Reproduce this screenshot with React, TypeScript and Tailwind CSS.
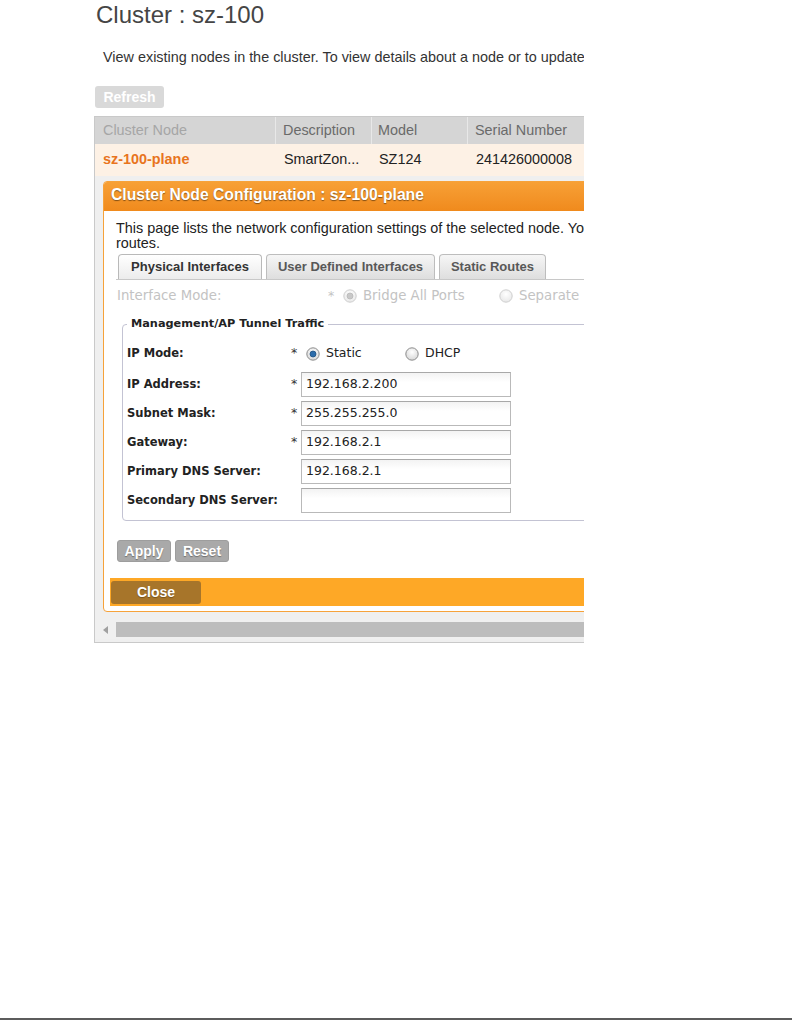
import React from "react";

function Radio({ checked, disabled }: { checked?: boolean; disabled?: boolean }) {
  const ring = disabled ? "#cfcfcf" : "#8c8c8c";
  const dot = disabled ? "#c8c8c8" : "#2b6cab";
  const gid = disabled ? "rgd" : "rg";
  return (
    <svg width="14" height="14" viewBox="0 0 14 14" className="shrink-0">
      <defs>
        <radialGradient id={gid} cx="50%" cy="35%" r="70%">
          <stop offset="0%" stopColor="#ffffff" />
          <stop offset="100%" stopColor={disabled ? "#e6e6e6" : "#d4d4d4"} />
        </radialGradient>
      </defs>
      <circle cx="7" cy="7" r="6.2" fill={`url(#${gid})`} stroke={ring} strokeWidth="1" />
      {checked && <circle cx="7" cy="7" r="3" fill={dot} stroke={disabled ? "#b8b8b8" : "#1d4f80"} strokeWidth="0.8" />}
    </svg>
  );
}

const rows = [
  { label: "IP Address:", star: true, value: "192.168.2.200" },
  { label: "Subnet Mask:", star: true, value: "255.255.255.0" },
  { label: "Gateway:", star: true, value: "192.168.2.1" },
  { label: "Primary DNS Server:", star: false, value: "192.168.2.1" },
  { label: "Secondary DNS Server:", star: false, value: "" },
];

export default function App() {
  return (
    <div className="flex h-[1020px] w-[792px] flex-col bg-white font-['Liberation_Sans',Arial,sans-serif]">
      <div className="ml-[94px] w-[490px] overflow-hidden">
        <h1 className="ml-[2px] mt-[1px] whitespace-nowrap text-[24px] leading-[28px] text-[#454545]">Cluster : sz-100</h1>
        <p className="ml-[9px] mt-[20px] whitespace-nowrap text-[14.4px] leading-[16px] text-[#333]">
          View existing nodes in the cluster. To view details about a node or to update its settings, click the node name.
        </p>
        <button className="ml-[1px] mt-[21px] h-[22px] w-[69px] rounded-[3px] bg-[#d9d9d9] text-[14px] font-bold leading-[22px] text-white">
          Refresh
        </button>

        <div className="mt-[7px] w-[720px] border border-[#c9c9c9] bg-[#efefef] pb-[3px]">
          {/* header */}
          <div className="flex h-[27px] bg-[#d5d5d5] text-[14.4px] leading-[16px] text-[#6a6a6a]">
            <div className="h-full w-[181px] border-r border-[#e8e8e8] pl-[8px] pt-[5px] text-[#a6a6a6]">Cluster Node</div>
            <div className="h-full w-[96px] border-r border-[#e8e8e8] pl-[7px] pt-[5px]">Description</div>
            <div className="h-full w-[96px] border-r border-[#e8e8e8] pl-[6px] pt-[5px]">Model</div>
            <div className="h-full flex-1 pl-[7px] pt-[5px]">Serial Number</div>
          </div>
          {/* row */}
          <div className="flex h-[32px] items-center bg-[#fdf1e5] text-[14.4px] text-[#222]">
            <div className="w-[181px] pl-[8px] font-bold text-[#e8741d]">sz-100-plane</div>
            <div className="w-[96px] pl-[8px]">SmartZon...</div>
            <div className="w-[96px] pl-[7px]">SZ124</div>
            <div className="flex-1 pl-[8px]">241426000008</div>
          </div>

          {/* dialog */}
          <div className="ml-[8px] mt-[5px] w-[640px] rounded-[4px] border border-[#f6a23a] bg-white">
            <div className="h-[29px] rounded-t-[3px] bg-gradient-to-b from-[#f7a035] to-[#f08a1c] pl-[7px] pt-[4px] text-[15.7px] font-bold leading-[18px] text-white [text-shadow:0_1px_1px_rgba(0,0,0,0.45)]">
              Cluster Node Configuration : sz-100-plane
            </div>
            <div className="pl-[12px]">
              <p className="mt-[10px] whitespace-nowrap text-[14.4px] leading-[15px] text-[#222]">
                This page lists the network configuration settings of the selected node. You can update the interface settings and static
                <br />
                routes.
              </p>
              {/* tabs */}
              <div className="mt-[3px] flex gap-[4px] border-b border-[#c8c8c8] pl-[2px] text-[13px] font-bold">
                <div className="flex h-[25px] w-[144px] items-center justify-center rounded-t-[4px] border border-b-0 border-[#b9b9b9] bg-gradient-to-b from-white to-[#ececec] text-[#333]">
                  Physical Interfaces
                </div>
                <div className="flex h-[25px] w-[169px] items-center justify-center rounded-t-[4px] border border-b-0 border-[#bdbdbd] bg-gradient-to-b from-[#f6f6f6] to-[#dedede] text-[#585858]">
                  User Defined Interfaces
                </div>
                <div className="flex h-[25px] w-[107px] items-center justify-center rounded-t-[4px] border border-b-0 border-[#bdbdbd] bg-gradient-to-b from-[#f6f6f6] to-[#dedede] text-[#585858]">
                  Static Routes
                </div>
              </div>

              <div className="font-['DejaVu_Sans',Tahoma,sans-serif]">
                {/* interface mode */}
                <div className="mt-[7px] flex h-[18px] items-center whitespace-nowrap pl-[1px] text-[13.3px] text-[#c3c3c3]">
                  <div className="w-[211px]">Interface Mode:</div>
                  <div className="w-[15px] text-[12.5px]">*</div>
                  <Radio checked disabled />
                  <div className="ml-[6px] w-[136px]">Bridge All Ports</div>
                  <Radio disabled />
                  <div className="ml-[6px]">Separate Ports</div>
                </div>

                {/* fieldset */}
                <fieldset className="ml-[6px] mt-[12px] w-[600px] rounded-[4px] border border-[#c3c3d3] px-[4px] pb-[7px]">
                  <legend className="px-[4px] text-[11.3px] font-bold leading-[14px] text-[#222]">Management/AP Tunnel Traffic</legend>
                  <div className="mt-[10px] flex h-[25px] items-center text-[12.5px] text-[#222]">
                    <div className="w-[164px] text-[11.5px] font-bold">IP Mode:</div>
                    <div className="w-[10px] text-[#333]">*</div>
                    <div className="ml-[5px] flex items-center">
                      <Radio checked />
                      <span className="ml-[6px] w-[79px]">Static</span>
                      <Radio />
                      <span className="ml-[6px]">DHCP</span>
                    </div>
                  </div>
                  <div className="mt-[6px] flex flex-col gap-[4px]">
                    {rows.map((r) => (
                      <div key={r.label} className="flex h-[25px] items-center text-[#222]">
                        <div className="w-[164px] whitespace-nowrap text-[11.5px] font-bold">{r.label}</div>
                        <div className="w-[10px] text-[12.5px] text-[#333]">{r.star ? "*" : ""}</div>
                        <div className="flex h-[25px] w-[210px] items-center border border-[#b9b9b9] border-t-[#a8a8a8] bg-gradient-to-b from-[#f3f3f3] to-white to-40% pl-[4px] text-[12.5px]">
                          {r.value}
                        </div>
                      </div>
                    ))}
                  </div>
                </fieldset>
              </div>

              {/* buttons */}
              <div className="mt-[19px] flex gap-[4px] pl-[1px]">
                <button className="h-[22px] w-[54px] rounded-[3px] border border-[#9d9d9d] bg-[#a9a9a9] text-[14px] font-bold leading-[20px] text-white [text-shadow:0_1px_1px_rgba(0,0,0,0.35)]">
                  Apply
                </button>
                <button className="h-[22px] w-[54px] rounded-[3px] border border-[#9d9d9d] bg-[#a9a9a9] text-[14px] font-bold leading-[20px] text-white [text-shadow:0_1px_1px_rgba(0,0,0,0.35)]">
                  Reset
                </button>
              </div>
            </div>

            {/* footer */}
            <div className="mb-[5px] ml-[6px] mt-[16px] flex h-[28px] items-center bg-[#fea826] pl-[1px]">
              <button className="h-[23px] w-[90px] rounded-[3px] bg-[#a7752a] text-[14px] font-bold leading-[23px] text-white [text-shadow:0_1px_1px_rgba(0,0,0,0.3)]">
                Close
              </button>
            </div>
          </div>

          {/* horizontal scrollbar */}
          <div className="mt-[8px] flex h-[19px] items-center bg-[#f0f0f0]">
            <div className="flex w-[21px] justify-center">
              <svg width="6" height="8" viewBox="0 0 6 8">
                <path d="M5 0 L0 4 L5 8 Z" fill="#a0a0a0" />
              </svg>
            </div>
            <div className="h-[15px] flex-1 bg-[#bdbdbd]" />
          </div>
        </div>
      </div>
      <div className="mt-auto h-[2px] bg-[#5c5c5c]" />
    </div>
  );
}
